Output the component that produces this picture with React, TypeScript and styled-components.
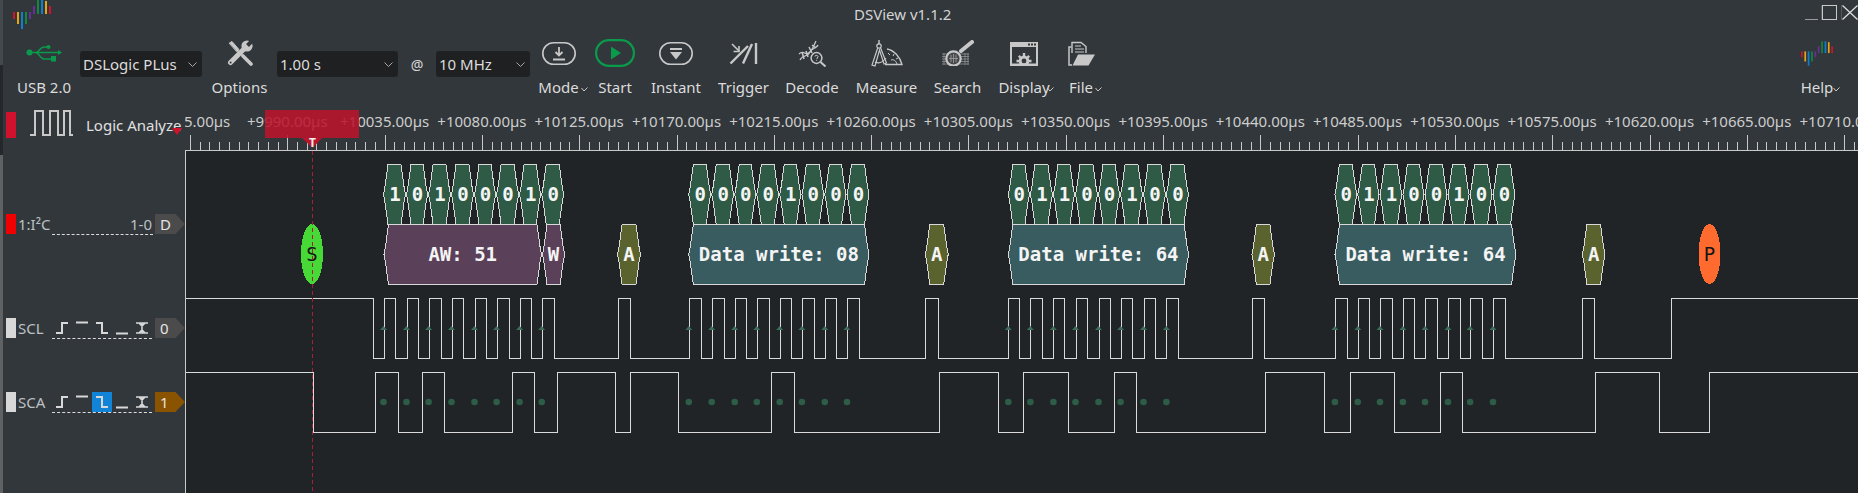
import React from 'react';
import styled, { createGlobalStyle } from 'styled-components';

const BG = '#32373b';
const ICON = '#c8c8c8';
const GREEN = '#0a9a4c';

const GlobalStyle = createGlobalStyle`
  html, body {
    margin: 0;
    padding: 0;
    background: ${BG};
    overflow: hidden;
  }
  #root {
    width: 1858px;
    height: 493px;
  }
`;

const Page = styled.div`
  display: flex;
  width: 1858px;
  height: 493px;
  background: ${BG};
  color: #d8d8d8;
  font-family: 'Noto Sans', sans-serif;
  font-size: 15px;
  overflow: hidden;
`;

const EdgeStrip = styled.div`
  flex: 0 0 3px;
  background: linear-gradient(
    to bottom,
    #44494d 0,
    #44494d 65px,
    #25282b 65px,
    #25282b 155px,
    #5f6163 155px,
    #5f6163 100%
  );
`;

const Main = styled.div`
  flex: 1;
  display: flex;
  flex-direction: column;
  min-width: 0;
`;

const TitleBar = styled.div`
  display: flex;
  height: 30px;
  flex: 0 0 30px;
  padding-left: 10px;
`;

const Title = styled.div`
  margin-left: 803px;
  line-height: 28px;
  color: #d4d4d4;
`;

const WindowButtons = styled.div`
  display: flex;
  margin-left: auto;
  padding-top: 5px;
`;

const WinBtn = styled.svg`
  display: block;
  fill: none;
  stroke: ${ICON};
`;

const Toolbar = styled.div`
  display: flex;
  align-items: flex-start;
  height: 70px;
  flex: 0 0 70px;
  padding: 8px 20px 0 5px;
`;

const ToolButton = styled.div<{ $w: number }>`
  display: flex;
  flex-direction: column;
  align-items: center;
  flex: 0 0 ${p => p.$w}px;
`;

const IconSlot = styled.div`
  display: flex;
  align-items: center;
  justify-content: center;
  height: 30px;
  svg {
    display: block;
  }
`;

const ToolLabel = styled.div`
  position: relative;
  margin-top: 9px;
  line-height: 20px;
  white-space: nowrap;
  color: #dcdcdc;
`;

const MenuChevron = styled.svg<{ $gap: number }>`
  position: absolute;
  top: 10px;
  left: calc(100% + ${p => p.$gap}px);
  fill: none;
  stroke: #c8c8c8;
`;

const Combo = styled.div<{ $w: number }>`
  display: flex;
  align-items: center;
  justify-content: space-between;
  box-sizing: border-box;
  flex: 0 0 ${p => p.$w}px;
  height: 26px;
  margin-top: 13px;
  padding: 0 5px 0 3px;
  background: #1f2021;
  border-radius: 3px;
  color: #dcdcdc;
  white-space: nowrap;
`;

const AtSign = styled.div`
  flex: 0 0 38px;
  margin-top: 13px;
  line-height: 28px;
  text-align: center;
  font-size: 14px;
  color: #d8d8d8;
`;

const Spacer = styled.div`
  flex: 1;
`;

const Workspace = styled.div`
  flex: 1;
  display: flex;
  min-height: 0;
`;

const Sidebar = styled.div`
  flex: 0 0 182px;
  width: 182px;
  min-width: 0;
  display: flex;
  flex-direction: column;
`;

const SidebarHead = styled.div`
  position: relative;
  display: flex;
  align-items: flex-start;
  width: 176px;
  height: 42px;
  flex: 0 0 42px;
  padding-left: 3px;
  overflow: hidden;
`;

const HeadBlock = styled.div`
  flex: 0 0 10px;
  height: 26px;
  margin-top: 4px;
  background: #d0122c;
`;

const HeadWave = styled.svg`
  flex: 0 0 43px;
  margin: 2px 0 0 14px;
  fill: none;
  stroke: #c8c8c8;
  stroke-width: 2;
`;

const HeadName = styled.div`
  margin: 7px 0 0 13px;
  line-height: 20px;
  white-space: nowrap;
  color: #e0e0e0;
`;

const HeadMark = styled.div`
  position: absolute;
  left: 169px;
  top: 20px;
  width: 10px;
  height: 7px;
  background: #d0122c;
  clip-path: polygon(0 0, 100% 0, 50% 100%);
`;

const TraceRow = styled.div<{ $h: number; $top?: number }>`
  display: flex;
  align-items: center;
  height: ${p => p.$h}px;
  margin-top: ${p => p.$top ?? 0}px;
  padding-left: 3px;
`;

const ColorBlock = styled.div<{ $color: string }>`
  flex: 0 0 10px;
  height: 20px;
  background: ${p => p.$color};
`;

const TraceName = styled.div`
  flex: 0 0 36px;
  padding-left: 2px;
  box-sizing: border-box;
  line-height: 20px;
  white-space: nowrap;
  color: #bcc0c2;
`;

const TriggerCells = styled.div`
  display: flex;
  width: 100px;
  height: 20px;
  border-bottom: 1px dashed #dcdcdc;
`;

const ChannelText = styled.div`
  width: 100px;
  height: 20px;
  padding-right: 1px;
  box-sizing: content-box;
  margin-right: -1px;
  border-bottom: 1px dashed #dcdcdc;
  line-height: 20px;
  text-align: right;
  color: #bcc0c2;
`;

const TriggerCell = styled.div<{ $active?: boolean }>`
  flex: 0 0 20px;
  height: 20px;
  background: ${p => (p.$active ? '#1184d8' : 'transparent')};
  svg {
    display: block;
    fill: none;
    stroke: #d8d8d8;
    stroke-width: 2;
  }
`;

const ChannelTag = styled.div<{ $color: string }>`
  flex: 0 0 30px;
  height: 20px;
  margin-left: 3px;
  padding-left: 5px;
  box-sizing: border-box;
  background: ${p => p.$color};
  clip-path: polygon(0 0, 68% 0, 100% 50%, 68% 100%, 0 100%);
  line-height: 20px;
  color: #e4e4e4;
`;

const Viewport = styled.div`
  flex: 1;
  display: flex;
  flex-direction: column;
  min-width: 0;
`;

const RulerSvg = styled.svg`
  display: block;
  flex: 0 0 42px;
`;

const RulerText = styled.text`
  font-family: 'Noto Sans', sans-serif;
  font-size: 15px;
  fill: #cdcdcd;
  text-anchor: middle;
`;

const Canvas = styled.div`
  flex: 1;
  box-sizing: border-box;
  background: #202427;
  border-top: 1px solid #c8c8c8;
  border-left: 1px solid #c8c8c8;
  min-height: 0;
  svg {
    display: block;
  }
`;

const BitText = styled.text<{ $dark?: boolean }>`
  font-family: 'DejaVu Sans Mono', monospace;
  font-size: 19px;
  font-weight: ${p => (p.$dark ? 400 : 700)};
  fill: ${p => (p.$dark ? '#141414' : '#f4f4f4')};
  text-anchor: middle;
  dominant-baseline: central;
`;

// page x of every SCL / SDA transition, both start high
const SCL_EDGES = [
  372.5, 383.5, 395.4, 406.5, 418.3, 428.6, 440.5, 451.5, 463.4, 474.5, 485.6, 496.6, 508.5, 519.6, 531.4, 541.7, 553.6,
  617.6, 629.5, 688.8, 700.7, 711.7, 723.6, 734.7, 745.7, 756.8, 768.7, 779.7, 790.8, 801.9, 813.8, 824.8, 835.9, 847,
  858.8, 925.3, 937.5, 1008.3, 1019.4, 1030.4, 1042.3, 1053.4, 1064.4, 1075.5, 1087.4, 1098.5, 1110.3, 1120.6, 1132.4,
  1143.5, 1155.4, 1166.4, 1177.5, 1251.5, 1263.7, 1334.9, 1346.8, 1357.8, 1368.9, 1380, 1391.8, 1402.9, 1414, 1425,
  1436.9, 1448, 1459.8, 1470.1, 1482, 1493, 1505.3, 1581.6, 1593.9, 1671,
];

const SDA_EDGES = [
  312.5, 375.3, 397.8, 421.5, 443.6, 511.7, 533.8, 556.7, 614.9, 630.3, 677.7, 771.4, 793.6, 938.7, 997.6, 1023.3,
  1067.6, 1113.5, 1135.6, 1264.5, 1323.8, 1349.9, 1393.8, 1440, 1462.2, 1594.7, 1658.7, 1709,
];

const BYTES = [
  { samples: [383.5, 406.5, 428.6, 451.5, 474.5, 496.6, 519.6, 541.7], bits: '10100010' },
  { samples: [688.8, 711.7, 734.7, 756.8, 779.7, 801.9, 824.8, 847], bits: '00001000' },
  { samples: [1008.3, 1030.4, 1053.4, 1075.5, 1098.5, 1120.6, 1143.5, 1166.4], bits: '01100100' },
  { samples: [1334.9, 1357.8, 1380, 1402.9, 1425, 1448, 1470.1, 1493], bits: '01100100' },
];

const BOXES = [
  { s: 384, e: 541.5, fill: '#5a4059', text: 'AW: 51' },
  { s: 542.5, e: 564.6, fill: '#5a4059', text: 'W' },
  { s: 688.8, e: 869, fill: '#385c60', text: 'Data write: 08' },
  { s: 1008.3, e: 1188.6, fill: '#385c60', text: 'Data write: 64' },
  { s: 1335, e: 1516, fill: '#385c60', text: 'Data write: 64' },
  { s: 617.6, e: 640.5, fill: '#5a632d', text: 'A' },
  { s: 925.3, e: 948.2, fill: '#5a632d', text: 'A' },
  { s: 1251.9, e: 1274.4, fill: '#5a632d', text: 'A' },
  { s: 1582.4, e: 1605, fill: '#5a632d', text: 'A' },
];

const CANVAS_LEFT = 186;
const CANVAS_TOP = 151;
const CANVAS_RIGHT = 1858;

const px = (v: number) => Math.round(v) + 0.5;

const wavePath = (edges: number[], high: number, low: number) => {
  let y = high;
  let d = `M${CANVAS_LEFT} ${y + 0.5}`;
  edges.forEach(x => {
    d += `H${px(x)}`;
    y = y === high ? low : high;
    d += `V${y + 0.5}`;
  });
  return d + `H${CANVAS_RIGHT}`;
};

const hexPoints = (s: number, e: number, top: number, bot: number) => {
  const cy = (top + bot) / 2;
  return [
    [s + 4.5, top],
    [e - 4.5, top],
    [e - 1.5, cy - 8],
    [e, cy],
    [e - 1.5, cy + 8],
    [e - 4.5, bot],
    [s + 4.5, bot],
    [s + 1.5, cy + 8],
    [s, cy],
    [s + 1.5, cy - 8],
  ]
    .map(p => p.join(','))
    .join(' ');
};

const Ruler: React.FC = () => {
  const majors = Array.from({ length: 18 }, (_, k) => 190 + 97.3 * k);
  const minors = Array.from({ length: 173 }, (_, k) => 190 + 9.73 * k).filter((_, k) => k % 10 !== 0);
  return (
    <RulerSvg width={1673} height={42} viewBox="185 108 1673 42">
      {majors.map((x, k) => (
        <RulerText key={k} x={x} y={127}>
          {`+${9945 + 45 * k}.00µs`}
        </RulerText>
      ))}
      <g stroke="#c8c8c8" strokeWidth={1} shapeRendering="crispEdges">
        {majors.map(x => (
          <line key={x} x1={px(x)} x2={px(x)} y1={135} y2={150} />
        ))}
        {minors.map(x => (
          <line key={x} x1={px(x)} x2={px(x)} y1={142} y2={150} />
        ))}
      </g>
      <rect x={265} y={110} width={94} height={28} fill="#bb152c" opacity={0.88} />
      <polygon points="302,138 322,138 312.5,148" fill="#bb152c" />
      <text x={312.5} y={147} textAnchor="middle" fontFamily="'Noto Sans', sans-serif" fontWeight={700} fontSize={12} fill="#f0f0f0">
        T
      </text>
    </RulerSvg>
  );
};

const Waves: React.FC = () => (
  <svg width={1672} height={342} viewBox={`${CANVAS_LEFT} ${CANVAS_TOP} 1672 342`}>
    <g fill="none" stroke="#dadada" strokeWidth={1} shapeRendering="crispEdges">
      <path d={wavePath(SCL_EDGES, 298, 358)} />
      <path d={wavePath(SDA_EDGES, 372, 432)} />
    </g>

    {BYTES.map(b =>
      b.samples.map((s, i) => {
        const e = (b.samples[i + 1] ?? s + 23) - 1;
        return (
          <g key={s}>
            <polygon
              points={hexPoints(s, e, 164.5, 224.5)}
              fill="#2f5b46"
              stroke="#d8d8d8"
              strokeWidth={1}
              shapeRendering="crispEdges"
            />
            <BitText x={(s + e) / 2 + 0.5} y={194}>
              {b.bits[i]}
            </BitText>
            <polygon points={`${s - 3.5},330 ${s + 3.5},330 ${s},326`} fill="#3d6e5a" />
            <circle cx={s} cy={402} r={3.3} fill="#2d5c47" />
          </g>
        );
      }),
    )}

    {BOXES.map(b => (
      <g key={b.s}>
        <polygon
          points={hexPoints(b.s, b.e, 224.5, 284.5)}
          fill={b.fill}
          stroke="#d8d8d8"
          strokeWidth={1}
          shapeRendering="crispEdges"
        />
        <BitText x={(b.s + b.e) / 2} y={254}>
          {b.text}
        </BitText>
      </g>
    ))}

    <ellipse cx={312} cy={254} rx={11} ry={30} fill="#47d936" shapeRendering="crispEdges" />
    <BitText $dark x={312} y={254}>
      S
    </BitText>
    <ellipse cx={1709.5} cy={254} rx={11} ry={30} fill="#ff6a2e" shapeRendering="crispEdges" />
    <BitText $dark x={1709.5} y={254}>
      P
    </BitText>

    <line
      x1={312.5}
      x2={312.5}
      y1={151}
      y2={493}
      stroke="#a81d38"
      strokeWidth={1}
      strokeDasharray="4 3"
      shapeRendering="crispEdges"
    />
  </svg>
);

const BAR_COLORS = ['#d0122c', '#e8a417', '#0e7fd0', '#0f8a3e', '#6a2e9c'];

const Logo: React.FC<{ w: number; h: number }> = ({ w, h }) => {
  const lower = [7, 12, 17, 12, 7];
  const upper = [
    [6, 8, '#6a2e9c'],
    [0, 14, '#0f8a3e'],
    [0, 14, '#0e7fd0'],
    [1, 13, '#e8a417'],
    [6, 8, '#d0122c'],
  ] as const;
  return (
    <svg width={w} height={h} viewBox="0 0 38 29">
      {lower.map((len, i) => (
        <rect key={i} x={i * 4} y={12} width={2} height={len} fill={BAR_COLORS[i]} />
      ))}
      {upper.map(([y, len, color], i) => (
        <rect key={i} x={20 + i * 4} y={y} width={2} height={len} fill={color} />
      ))}
    </svg>
  );
};

const UsbIcon = () => (
  <svg width={36} height={18} viewBox="0 0 36 18" fill={GREEN} stroke={GREEN}>
    <circle cx={3.5} cy={8.5} r={3} stroke="none" />
    <path d="M3 8.5H33" strokeWidth={1.5} />
    <path d="M36 8.5l-4-2.5v5z" stroke="none" />
    <path d="M10 8.5C13 8.5 14 3 18 3H22" fill="none" strokeWidth={1.5} />
    <path d="M10 8.5C13 8.5 14 15 18 15H26" fill="none" strokeWidth={1.5} />
    <circle cx={22.5} cy={3} r={2} stroke="none" />
    <rect x={25} y={12} width={5} height={5.5} stroke="none" />
  </svg>
);

const OptionsIcon = () => (
  <svg width={26} height={26} viewBox="0 0 26 26" fill="none" stroke={ICON} strokeLinecap="round">
    <path d="M2.5 3L5 1.5L12 9.5L10 11.5Z" fill={ICON} strokeWidth={1} />
    <path d="M10 10L17 17" strokeWidth={1.6} />
    <path d="M16 16L24 24" strokeWidth={3.6} />
    <path d="M3.5 22.5L17.5 8.5" strokeWidth={5} />
    <circle cx={20} cy={6} r={5.6} fill={ICON} stroke="none" />
    <path d="M20.5 5.5L26 0" stroke={BG} strokeWidth={4} strokeLinecap="butt" />
    <circle cx={3.6} cy={22.4} r={1} fill={BG} stroke="none" />
  </svg>
);

const PillIcon: React.FC<{ w: number; h: number; color?: string; sw?: number; children: React.ReactNode }> = ({
  w,
  h,
  color = ICON,
  sw = 1.6,
  children,
}) => (
  <svg width={w} height={h} viewBox={`0 0 ${w} ${h}`}>
    <rect x={sw / 2} y={sw / 2} width={w - sw} height={h - sw} rx={(h - sw) / 2} fill="none" stroke={color} strokeWidth={sw} />
    {children}
  </svg>
);

const ModeIcon = () => (
  <PillIcon w={34} h={23}>
    <path d="M17 5V13M13.5 10L17 13.5L20.5 10" fill="none" stroke={ICON} strokeWidth={1.8} />
    <path d="M11 17.5H23" stroke={ICON} strokeWidth={2} />
  </PillIcon>
);

const StartIcon = () => (
  <PillIcon w={40} h={28} color={GREEN} sw={2.2}>
    <path d="M16 7.5L26 14L16 20.5Z" fill={GREEN} />
  </PillIcon>
);

const InstantIcon = () => (
  <PillIcon w={34} h={23}>
    <path d="M11 6H23V8H11Z" fill={ICON} />
    <path d="M11 10H23L17 17.5Z" fill={ICON} />
  </PillIcon>
);

const TriggerIcon = () => (
  <svg width={29} height={23} viewBox="0 0 29 23" fill="none" stroke={ICON}>
    <path d="M3 2L10 9" strokeWidth={1.6} />
    <path d="M10 4V9.5H4.5" strokeWidth={1.6} />
    <path d="M1.5 21.5L19 4" strokeWidth={2.4} />
    <path d="M14 21.5L23 2" strokeWidth={2.4} />
    <path d="M27 1V22" strokeWidth={2.4} />
  </svg>
);

const DecodeIcon = () => (
  <svg width={29} height={27} viewBox="0 0 29 27" fill="none" stroke={ICON}>
    <path d="M1 14C6 9 7 17 12 12C15 9 16 5 18 1" strokeWidth={1.3} />
    <path d="M2 20C4 15 10 17 12 12C14 8 19 8 20 5" strokeWidth={1.3} />
    <path d="M4 12L6 19M8 11L10 17M11 7L14 13M14 5L18 8" strokeWidth={1.5} />
    <circle cx={18.5} cy={18} r={5.4} fill={BG} strokeWidth={1.5} />
    <path d="M17 16.5C17 14.8 20 15 20 16.8C20 18 18.6 18 18.6 19.2" strokeWidth={1} />
    <path d="M18.6 20.2V21" strokeWidth={1} />
    <path d="M22.5 22L27.5 26.5" strokeWidth={2} />
  </svg>
);

const MeasureIcon = () => (
  <svg width={32} height={27} viewBox="0 0 32 27" fill="none" stroke={ICON}>
    <path d="M8 0V4" strokeWidth={1.4} />
    <path d="M8 4L1 25L4 26L8.5 10L13 24L15.5 23Z" strokeWidth={1.2} />
    <circle cx={8} cy={6} r={2.2} fill={BG} strokeWidth={1.2} />
    <path d="M4 22C8 24 12 22 15 18" strokeWidth={1.2} />
    <path d="M16 9C23 10 29 17 31 24.5H14" strokeWidth={1.3} />
    <path d="M20 20C23 19 25 21 26 24M17 13L19 15M23 14L22 16M27 18L25 19" strokeWidth={1} />
  </svg>
);

const SearchIcon = () => (
  <svg width={33} height={26} viewBox="0 0 33 26" fill="none" stroke="#8f9395">
    <path
      d="M1 14H28M1 16.5H28M1 19H28M1 21.5H28M1 24H28M3 13V25M7 13V25M24 13V25M27 13V25"
      strokeWidth={0.8}
    />
    <circle cx={12.5} cy={18.5} r={7.2} fill="#44484b" stroke={ICON} strokeWidth={2.2} />
    <path d="M8 18.5H17M12.5 14V23M10 14.8V22.2M15 14.8V22.2" stroke="#9a9a9a" strokeWidth={0.9} />
    <path d="M20 11L31 2" stroke={ICON} strokeWidth={4} strokeLinecap="round" />
  </svg>
);

const DisplayIcon = () => (
  <svg width={28} height={25} viewBox="0 0 28 25">
    <path fillRule="evenodd" d="M0 1H28V25H0ZM2 6V23H26V6Z" fill={ICON} />
    <rect x={18} y={2.5} width={2} height={2} fill={BG} />
    <rect x={21} y={2.5} width={2} height={2} fill={BG} />
    <rect x={24} y={2.5} width={2} height={2} fill={BG} />
    <g stroke={ICON} strokeWidth={2.4}>
      <path d="M14 12V24M6.5 20H21.5M8.8 14.8L19.2 25M19.2 14.8L8.8 25" />
    </g>
    <circle cx={14} cy={20} r={5.4} fill={ICON} />
    <circle cx={14} cy={20} r={2.4} fill={BG} />
    <rect x={2} y={22.5} width={24} height={1.5} fill={ICON} />
  </svg>
);

const FileIcon = () => (
  <svg width={27} height={25} viewBox="0 0 27 25">
    <path d="M4 12V1.5H13L18 5.5V12" fill="none" stroke={ICON} strokeWidth={1.4} />
    <path d="M7 5H13M7 8H16M7 11H16" stroke={ICON} strokeWidth={1.2} />
    <path d="M3.5 6H1V24H4" fill="none" stroke={ICON} strokeWidth={1.5} />
    <path d="M4.5 24.5L10 13.5H27L20.5 24.5Z" fill={ICON} />
  </svg>
);

const Chevron: React.FC<{ gap?: number }> = ({ gap = 2 }) => (
  <MenuChevron $gap={gap} width={7} height={5} viewBox="0 0 7 5">
    <path d="M0.5 1L3 4L6.5 0.5" />
  </MenuChevron>
);

const ComboArrow = () => (
  <svg width={9} height={5} viewBox="0 0 9 5" fill="none" stroke="#a8a8a8">
    <path d="M0.5 0.5L4.5 4.5L8.5 0.5" />
  </svg>
);

const RISE = 'M4 15H10V5H16';
const HIGH = 'M4 4.5H16';
const FALL = 'M4 5H10V15H16';
const LOW = 'M4 15.5H16';
const BOTH = 'M4 5H16M4 15H16M10 5V15M7 5L10 8L13 5M7 15L10 12L13 15';

const TriggerIcons: React.FC<{ active?: number }> = ({ active }) => (
  <TriggerCells>
    {[RISE, HIGH, FALL, LOW, BOTH].map((d, i) => (
      <TriggerCell key={d} $active={active === i}>
        <svg width={20} height={20} viewBox="0 0 20 20">
          <path d={d} strokeWidth={i === 4 ? 1.6 : 2} />
        </svg>
      </TriggerCell>
    ))}
  </TriggerCells>
);

const App: React.FC = () => (
  <Page>
    <GlobalStyle />
    <EdgeStrip />
    <Main>
      <TitleBar>
        <Logo w={38} h={29} />
        <Title>DSView v1.1.2</Title>
        <WindowButtons>
          <WinBtn width={17} height={15} viewBox="0 0 17 15">
            <path d="M0 14.5H13" stroke="#9a9a9a" />
            <path d="M16.5 0V15" stroke="#565a5d" />
          </WinBtn>
          <WinBtn width={20} height={15} viewBox="0 0 20 15">
            <rect x={0.5} y={0.5} width={14} height={14} />
            <path d="M19.5 0V15" stroke="#565a5d" />
          </WinBtn>
          <WinBtn width={16} height={15} viewBox="0 0 16 15">
            <path d="M0.5 0.5L15.5 14.5M15.5 0.5L0.5 14.5" strokeWidth={1.3} stroke="#dcdcdc" />
          </WinBtn>
        </WindowButtons>
      </TitleBar>

      <Toolbar>
        <ToolButton $w={72}>
          <IconSlot>
            <UsbIcon />
          </IconSlot>
          <ToolLabel>USB 2.0</ToolLabel>
        </ToolButton>
        <Combo $w={122}>
          DSLogic PLus
          <ComboArrow />
        </Combo>
        <ToolButton $w={75}>
          <IconSlot>
            <OptionsIcon />
          </IconSlot>
          <ToolLabel>Options</ToolLabel>
        </ToolButton>
        <Combo $w={121}>
          1.00 s
          <ComboArrow />
        </Combo>
        <AtSign>@</AtSign>
        <Combo $w={94}>
          10 MHz
          <ComboArrow />
        </Combo>
        <ToolButton $w={57}>
          <IconSlot>
            <ModeIcon />
          </IconSlot>
          <ToolLabel>
            Mode
            <Chevron />
          </ToolLabel>
        </ToolButton>
        <ToolButton $w={56}>
          <IconSlot>
            <StartIcon />
          </IconSlot>
          <ToolLabel>Start</ToolLabel>
        </ToolButton>
        <ToolButton $w={66}>
          <IconSlot>
            <InstantIcon />
          </IconSlot>
          <ToolLabel>Instant</ToolLabel>
        </ToolButton>
        <ToolButton $w={69}>
          <IconSlot>
            <TriggerIcon />
          </IconSlot>
          <ToolLabel>Trigger</ToolLabel>
        </ToolButton>
        <ToolButton $w={68}>
          <IconSlot>
            <DecodeIcon />
          </IconSlot>
          <ToolLabel>Decode</ToolLabel>
        </ToolButton>
        <ToolButton $w={81}>
          <IconSlot>
            <MeasureIcon />
          </IconSlot>
          <ToolLabel>Measure</ToolLabel>
        </ToolButton>
        <ToolButton $w={61}>
          <IconSlot>
            <SearchIcon />
          </IconSlot>
          <ToolLabel>Search</ToolLabel>
        </ToolButton>
        <ToolButton $w={72}>
          <IconSlot>
            <DisplayIcon />
          </IconSlot>
          <ToolLabel>
            Display
            <Chevron gap={-3} />
          </ToolLabel>
        </ToolButton>
        <ToolButton $w={42}>
          <IconSlot>
            <FileIcon />
          </IconSlot>
          <ToolLabel>
            File
            <Chevron />
          </ToolLabel>
        </ToolButton>
        <Spacer />
        <ToolButton $w={42}>
          <IconSlot>
            <Logo w={32} h={25} />
          </IconSlot>
          <ToolLabel>
            Help
            <Chevron gap={0} />
          </ToolLabel>
        </ToolButton>
      </Toolbar>

      <Workspace>
        <Sidebar>
          <SidebarHead>
            <HeadBlock />
            <HeadWave width={43} height={26} viewBox="0 0 43 26">
              <path d="M0 25H5V1H13V25H20V1H28V25H34V1H40V25H43" />
            </HeadWave>
            <HeadName>Logic Analyzer</HeadName>
            <HeadMark />
          </SidebarHead>
          <TraceRow $h={148}>
            <ColorBlock $color="#f00000" />
            <TraceName>1:I²C</TraceName>
            <ChannelText>1-0</ChannelText>
            <ChannelTag $color="#4b4b4b">D</ChannelTag>
          </TraceRow>
          <TraceRow $h={60}>
            <ColorBlock $color="#d8d8d8" />
            <TraceName>SCL</TraceName>
            <TriggerIcons />
            <ChannelTag $color="#4b4b4b">0</ChannelTag>
          </TraceRow>
          <TraceRow $h={60} $top={14}>
            <ColorBlock $color="#d8d8d8" />
            <TraceName>SCA</TraceName>
            <TriggerIcons active={2} />
            <ChannelTag $color="#8a5300">1</ChannelTag>
          </TraceRow>
        </Sidebar>
        <Viewport>
          <Ruler />
          <Canvas>
            <Waves />
          </Canvas>
        </Viewport>
      </Workspace>
    </Main>
  </Page>
);

export default App;
